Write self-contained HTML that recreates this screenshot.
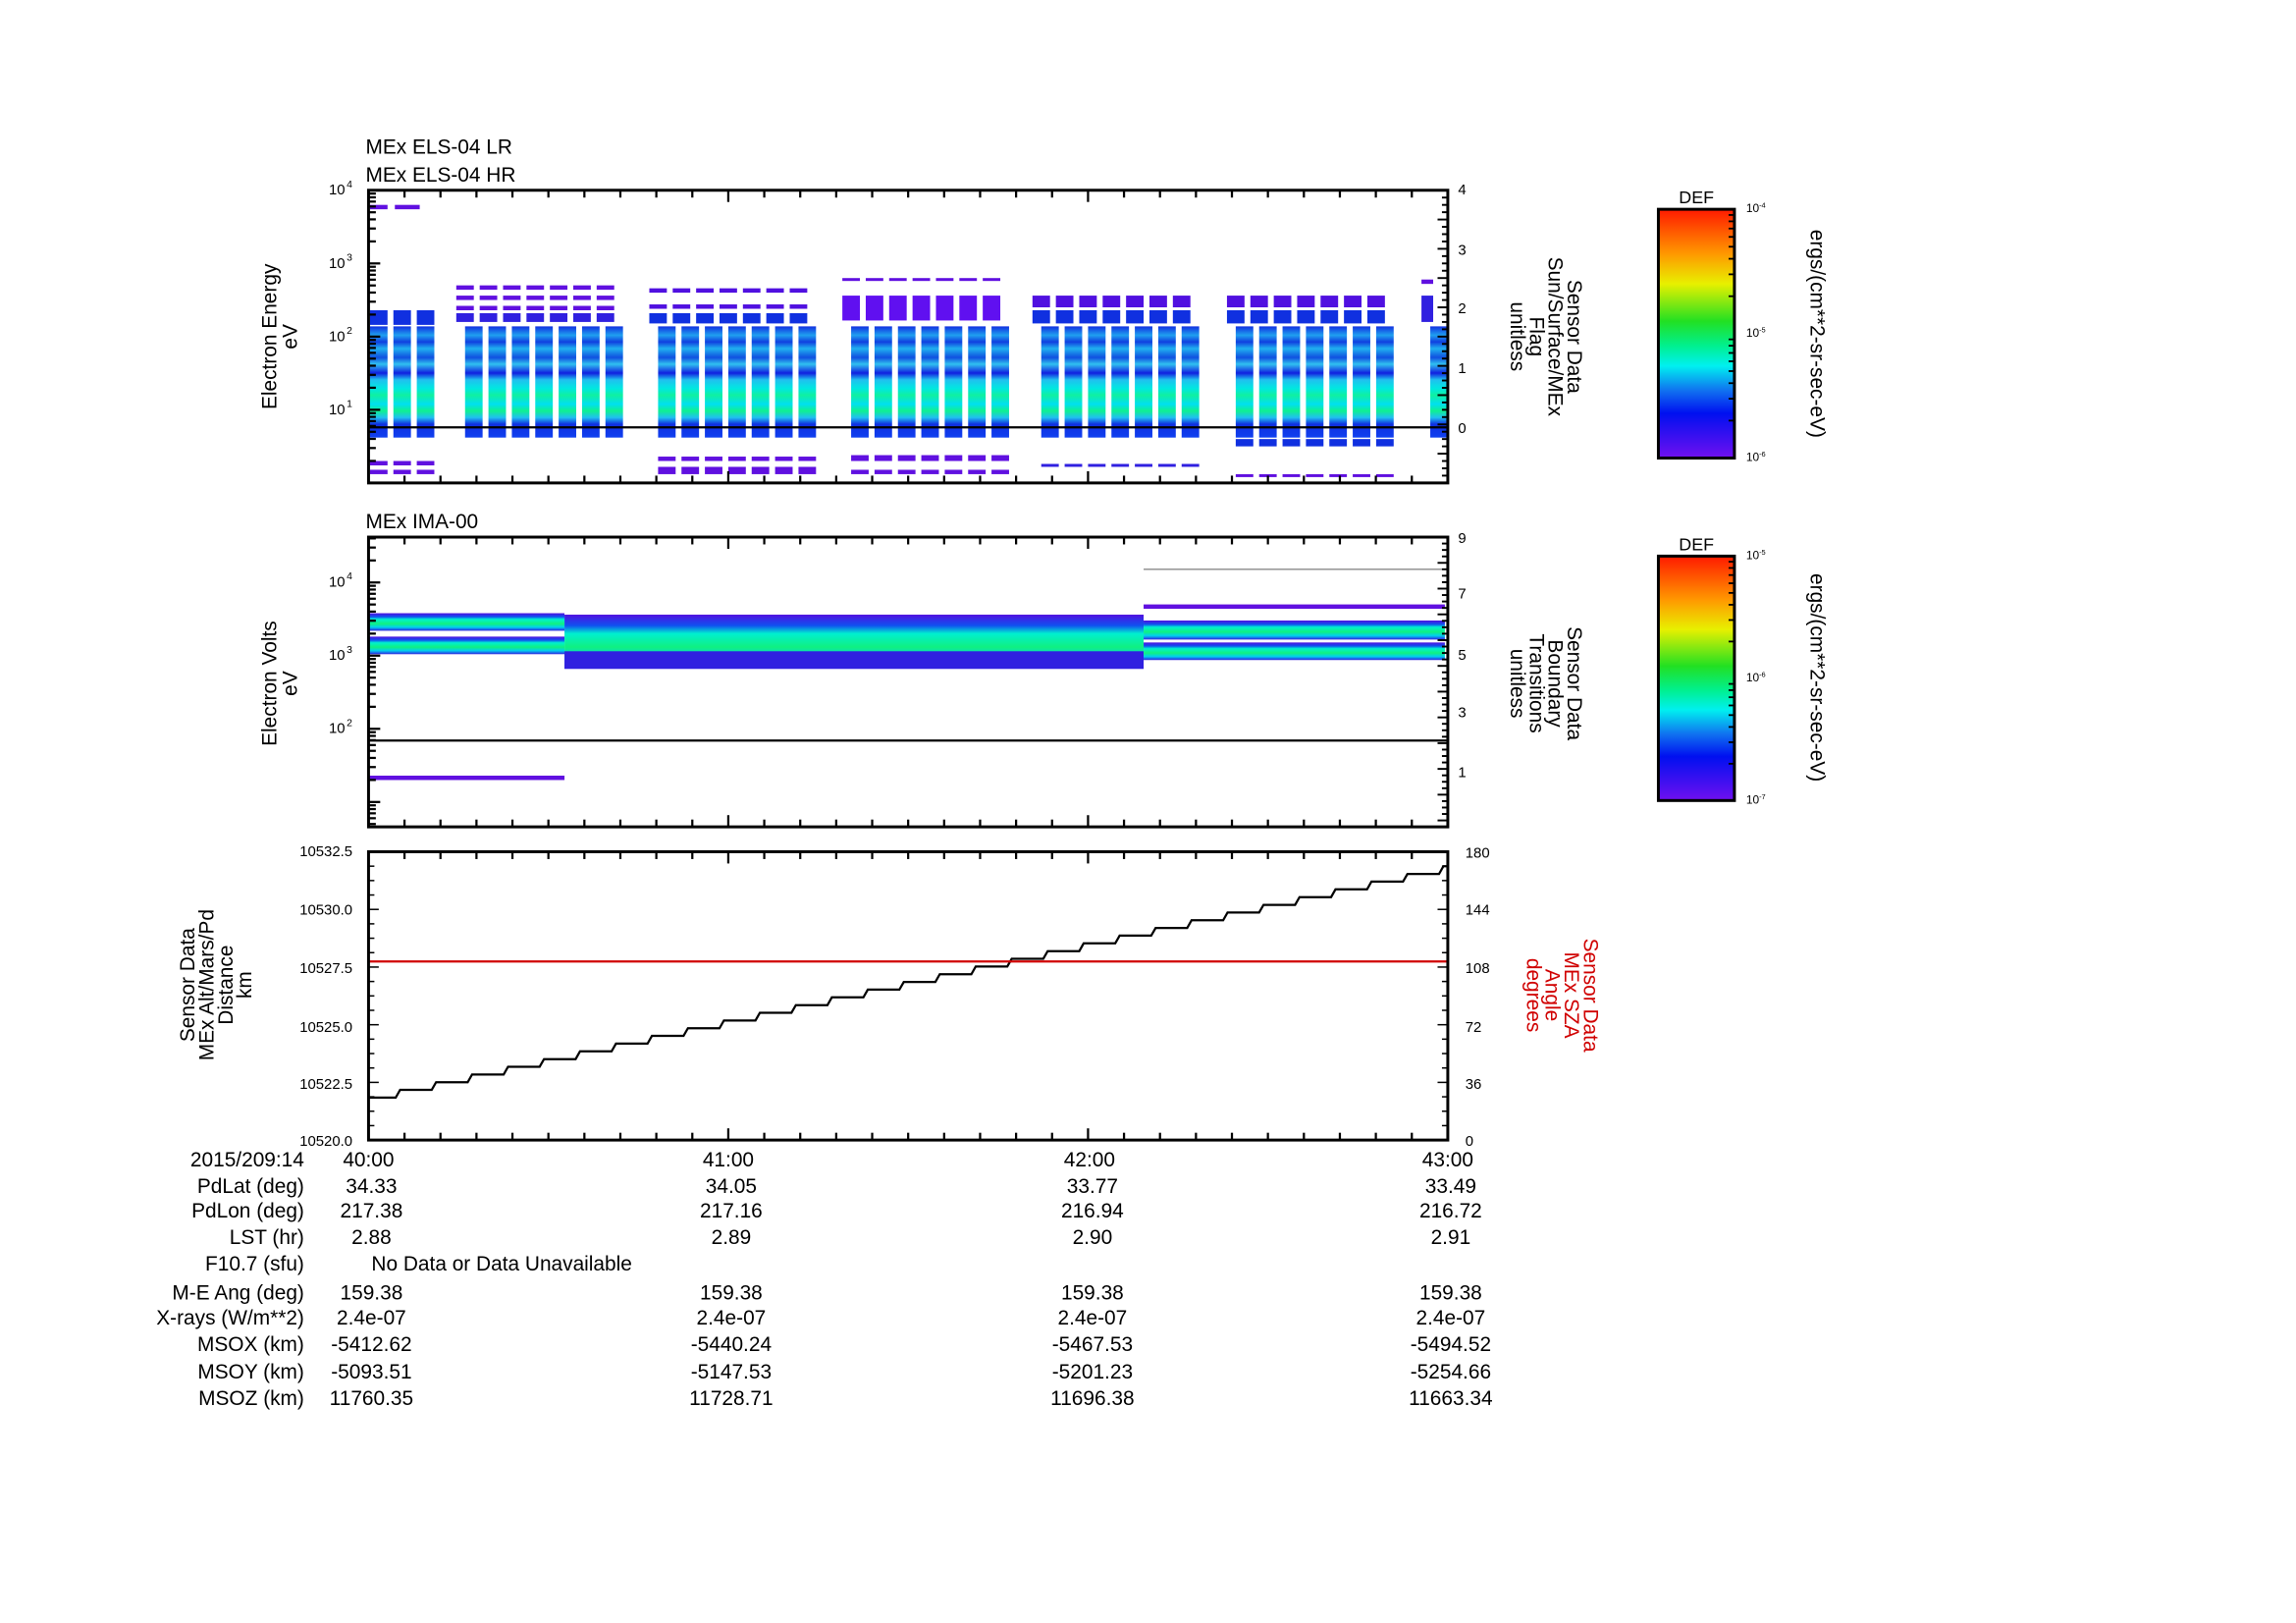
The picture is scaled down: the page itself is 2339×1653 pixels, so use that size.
<!DOCTYPE html>
<html><head><meta charset="utf-8"><style>
html,body{margin:0;padding:0;background:#fff;}
svg{display:block;}
text{font-family:"Liberation Sans",sans-serif;fill:#000;}
</style></head><body>
<svg id="s" width="2339" height="1653" viewBox="0 0 1570 1109" preserveAspectRatio="none" xmlns="http://www.w3.org/2000/svg">
<defs>
<linearGradient id="cb" x1="0" y1="0" x2="0" y2="1">
<stop offset="0" stop-color="#ff1a00"/><stop offset="0.18" stop-color="#ff9900"/><stop offset="0.3" stop-color="#e8f000"/><stop offset="0.45" stop-color="#22e022"/><stop offset="0.55" stop-color="#00f090"/><stop offset="0.63" stop-color="#00f0f0"/><stop offset="0.73" stop-color="#1070f0"/><stop offset="0.82" stop-color="#0010f0"/><stop offset="1" stop-color="#7010f0"/>
</linearGradient>
<linearGradient id="col" x1="0" y1="0" x2="0" y2="1">
<stop offset="0" stop-color="#1030e0"/><stop offset="0.08" stop-color="#20a0f0"/><stop offset="0.14" stop-color="#1040e0"/><stop offset="0.2" stop-color="#20b0f0"/><stop offset="0.28" stop-color="#1050e0"/><stop offset="0.34" stop-color="#30c0f0"/><stop offset="0.42" stop-color="#1020e0"/><stop offset="0.48" stop-color="#20c0f0"/><stop offset="0.56" stop-color="#00e8e0"/><stop offset="0.62" stop-color="#10f0a0"/><stop offset="0.7" stop-color="#00e0f0"/><stop offset="0.76" stop-color="#10f090"/><stop offset="0.82" stop-color="#20c0f0"/><stop offset="0.88" stop-color="#1030e0"/><stop offset="1" stop-color="#1040f0"/>
</linearGradient>
<linearGradient id="band" x1="0" y1="0" x2="0" y2="1">
<stop offset="0" stop-color="#5010e0"/><stop offset="0.2" stop-color="#1050f0"/><stop offset="0.35" stop-color="#00f0d0"/><stop offset="0.6" stop-color="#10f080"/><stop offset="0.8" stop-color="#00d0f0"/><stop offset="1" stop-color="#3020e0"/>
</linearGradient>
</defs>
<g id="g"></g>
</svg>
<script>
var g=document.getElementById('g'),h='';
function R(x,y,w,hh,f){h+='<rect x="'+x+'" y="'+y+'" width="'+w+'" height="'+hh+'" fill="'+f+'"/>';}
function L(x1,y1,x2,y2,c,w){h+='<line x1="'+x1+'" y1="'+y1+'" x2="'+x2+'" y2="'+y2+'" stroke="'+(c||'#000')+'" stroke-width="'+(w||1)+'"/>';}
function T(x,y,s,fs,a,extra){h+='<text x="'+x+'" y="'+y+'" font-size="'+fs+'" text-anchor="'+(a||'start')+'" '+(extra||'')+'>'+s+'</text>';}
var X0=252,X1=990;
var groups=[[253,3],[318,7],[450,7],[582,7],[712,7],[845,7],[978,1]];
groups.forEach(function(gr,gi){for(var i=0;i<gr[1];i++){var x=gr[0]+i*16;var w=12;
R(x,223,w,76,'url(#col)');
if(gi==0){R(x,212,w,10,'#1030e0');R(x,315,w,3,'#6010e0');R(x,321,w,3,'#6010e0');}
else if(gi==1){R(x-6,195,w,3,'#6010e0');R(x-6,202,w,3,'#6010e0');R(x-6,209,w,3,'#6010e0');R(x-6,214,w,6,'#3020e0');}
else if(gi==2){R(x-6,197,w,3,'#5010e0');R(x-6,208,w,3,'#5010e0');R(x-6,214,w,7,'#1030e0');R(x,312,w,3,'#6010e0');R(x,319,w,5,'#6010e0');}
else if(gi==3){R(x-6,190,w,2,'#6010e0');R(x-6,202,w,17,'#6010f0');R(x,311,w,4,'#6010e0');R(x,321,w,3,'#6010e0');}
else if(gi==4){R(x-6,202,w,8,'#5010e0');R(x-6,212,w,9,'#1030e0');R(x,317,w,2,'#3020e0');}
else if(gi==5){R(x-6,202,w,8,'#5010e0');R(x-6,212,w,9,'#1030e0');R(x,324,w,2,'#6010e0');R(x,300,w,5,'#1030e0');}
else {R(x-6,191,8,3,'#6010e0');R(x-6,202,8,18,'#3020e0');}
}});
R(253,140,12,3,'#6010e0');R(270,140,17,3,'#6010e0');
L(X0,292,X1,292,'#000',1.5);
R(252,419,134,12,'url(#band)');R(252,435,134,12,'url(#band)');
R(386,420,396,37,'url(#band)');R(386,445,396,12,'#3020e0');
R(782,424,206,13,'url(#band)');R(782,439,206,12,'url(#band)');
R(782,413,206,3,'#6010e0');L(782,389,988,389,'#888',1);
R(252,530,134,3,'#6010e0');
L(X0,506,X1,506,'#000',1.5);
var pts='M252,750';var y=750;for(var i=0;i<30;i++){var xa=252+(i+1)*24.6-6;pts+=' L'+xa.toFixed(1)+','+y.toFixed(1);y-=5.27;pts+=' L'+(xa+3).toFixed(1)+','+y.toFixed(1);} pts+=' L990,'+y.toFixed(1);
h+='<path d="'+pts+'" fill="none" stroke="#000" stroke-width="1.5"/>';
L(X0,657,X1,657,'#d00000',1.5);
function frame(y0,y1){h+='<rect x="'+X0+'" y="'+y0+'" width="'+(X1-X0)+'" height="'+(y1-y0)+'" fill="none" stroke="#000" stroke-width="2"/>';
for(var i=0;i<=30;i++){var x=X0+i*(X1-X0)/30;var big=i%10==0;var len=big?8:5;L(x,y0,x,y0+len,'#000',1.5);L(x,y1,x,y1-len,'#000',1.5);} }
frame(130,330);frame(367,565);frame(582,779);
function logt(top,dec,y1,ymin){for(var d=0;d<6;d++){for(var m=1;m<10;m++){var yy=top+dec*d-dec*Math.log10(m);if(yy<ymin||yy>y1)continue;L(X0,yy,X0+(m==1?8:5),yy,'#000',1.5);}}}
logt(130,50,330,130);logt(348,50,565,367);
function rt(y0,y1,n){for(var i=0;i<=n;i++){var yy=y0+i*(y1-y0)/n;L(X1,yy,X1-((i%4==0)?7:4),yy,'#000',1.3);}}
rt(130,330,40);rt(367,565,45);
for(var i=0;i<=20;i++){var yy=582+i*197/20;L(X0,yy,X0+(i%4==0?7:4),yy);L(X1,yy,X1-(i%4==0?7:4),yy);}
[['4',133],['3',183],['2',233],['1',283]].forEach(function(a){T(236,a[1],'10',10,'end');T(237,a[1]-5,a[0],7);});
[['4',133],['3',174],['2',214],['1',255],['0',296]].forEach(function(a){T(997,a[1],a[0],10);});
[['4',401],['3',451],['2',501]].forEach(function(a){T(236,a[1],'10',10,'end');T(237,a[1]-5,a[0],7);});
[['9',371],['7',409],['5',451],['3',490],['1',531]].forEach(function(a){T(997,a[1],a[0],10);});
[['10532.5',585],['10530.0',625],['10527.5',665],['10525.0',705],['10522.5',744],['10520.0',783]].forEach(function(a){T(241,a[1],a[0],10,'end');});
[['180',586],['144',625],['108',665],['72',705],['36',744],['0',783]].forEach(function(a){T(1002,a[1],a[0],10);});
T(250,105,'MEx ELS-04 LR',14);T(250,124,'MEx ELS-04 HR',14);T(250,361,'MEx IMA-00',14);
function rot(x,y,s,ang,col){h+='<text x="'+x+'" y="'+y+'" font-size="14" text-anchor="middle" transform="rotate('+ang+' '+x+' '+y+')" '+(col?'style="fill:'+col+'"':'')+'>'+s+'</text>';}
rot(189,230,'Electron Energy',-90);rot(203,230,'eV',-90);
rot(189,467,'Electron Volts',-90);rot(203,467,'eV',-90);
rot(133,673,'Sensor Data',-90);rot(146,673,'MEx Alt/Mars/Pd',-90);rot(159,673,'Distance',-90);rot(172,673,'km',-90);
[['Sensor Data',1072],['Sun/Surface/MEx',1059],['Flag',1046],['unitless',1033]].forEach(function(a){rot(a[1],230,a[0],90);});
[['Sensor Data',1072],['Boundary',1059],['Transitions',1046],['unitless',1033]].forEach(function(a){rot(a[1],467,a[0],90);});
[['Sensor Data',1083],['MEx SZA',1070],['Angle',1057],['degrees',1044]].forEach(function(a){rot(a[1],680,a[0],90,'#d00000');});
function cbar(y0,y1,t,m,b){R(1134,y0,52,y1-y0,'url(#cb)');h+='<rect x="1134" y="'+y0+'" width="52" height="'+(y1-y0)+'" fill="none" stroke="#000" stroke-width="2"/>';
T(1160,y0-4,'DEF',12,'middle');var d=(y1-y0)/2;for(var k=0;k<2;k++)for(var mm=2;mm<10;mm++){var yy=y0+d*(k+1)-d*Math.log10(mm);L(1186,yy,1182,yy,'#000',1.2);}
T(1194,y0+2,'10'+'<tspan font-size="5" dy="-3">'+t+'</tspan>',8);T(1194,y0+d+2,'10<tspan font-size="5" dy="-3">'+m+'</tspan>',8);T(1194,y1+2,'10<tspan font-size="5" dy="-3">'+b+'</tspan>',8);}
cbar(143,313,'-4','-5','-6');cbar(380,547,'-5','-6','-7');
rot(1238,228,'ergs/(cm**2-sr-sec-eV)',90);rot(1238,463,'ergs/(cm**2-sr-sec-eV)',90);
var cols=[252,498,745,990];
T(208,797,'2015/209:14',14,'end');['40:00','41:00','42:00','43:00'].forEach(function(s,i){T(cols[i],797,s,14,'middle');});
var rows=[['PdLat (deg)',815,['34.33','34.05','33.77','33.49']],['PdLon (deg)',832,['217.38','217.16','216.94','216.72']],['LST (hr)',850,['2.88','2.89','2.90','2.91']],
['M-E Ang (deg)',888,['159.38','159.38','159.38','159.38']],['X-rays (W/m**2)',905,['2.4e-07','2.4e-07','2.4e-07','2.4e-07']],['MSOX (km)',923,['-5412.62','-5440.24','-5467.53','-5494.52']],
['MSOY (km)',942,['-5093.51','-5147.53','-5201.23','-5254.66']],['MSOZ (km)',960,['11760.35','11728.71','11696.38','11663.34']]];
rows.forEach(function(r){T(208,r[1],r[0],14,'end');r[2].forEach(function(v,i){T(cols[i]+2,r[1],v,14,'middle');});});
T(208,868,'F10.7 (sfu)',14,'end');T(254,868,'No Data or Data Unavailable',14);
g.innerHTML=h;
</script>
</body></html>
